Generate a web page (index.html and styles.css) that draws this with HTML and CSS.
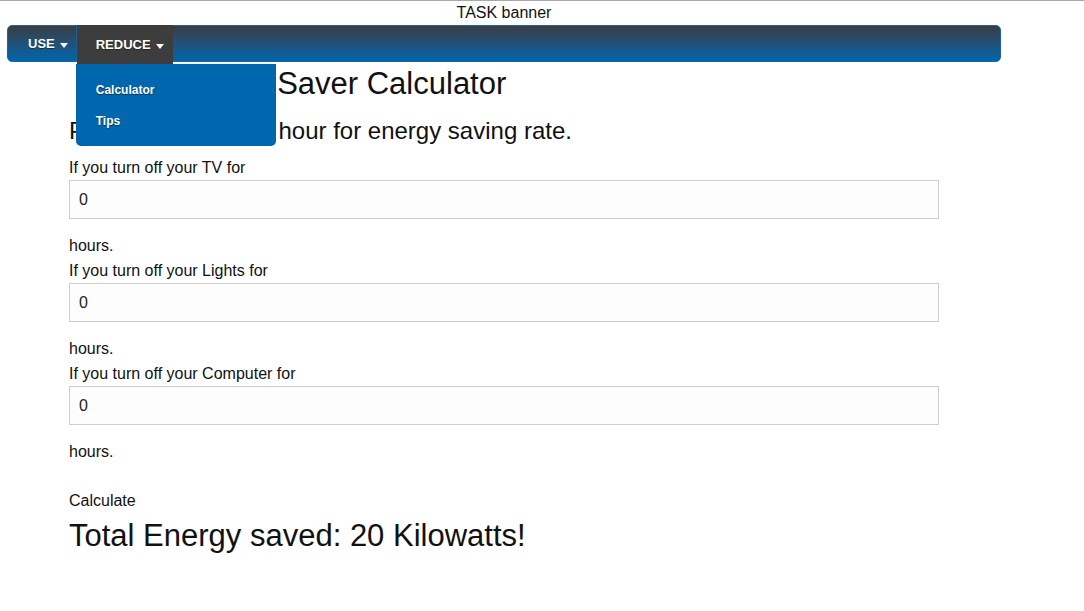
FILE: index.html
```html
<!DOCTYPE html>
<html lang="en">
<head>
<meta charset="utf-8">
<title>Energy Saver Calculator</title>
<link rel="stylesheet" href="styles.css">
</head>
<body>
<div class="page">
  <div class="banner">TASK banner</div>
  <nav class="nav">
    <ul class="menu">
      <li class="menu-item"><a href="#" class="menu-link">USE <span class="caret"></span></a></li>
      <li class="menu-item open"><a href="#" class="menu-link">REDUCE <span class="caret"></span></a>
        <ul class="dropdown">
          <li><a href="#" class="dropdown-link">Calculator</a></li>
          <li><a href="#" class="dropdown-link">Tips</a></li>
        </ul>
      </li>
    </ul>
  </nav>
  <main class="content">
    <h1 class="title">Home Energy Saver Calculator</h1>
    <h2 class="subtitle">Please type time in hour for energy saving rate.</h2>
    <form class="calc">
      <div class="field">
        <label class="label">If you turn off your TV for</label>
        <input class="input" type="text" value="0">
        <div class="unit">hours.</div>
      </div>
      <div class="field">
        <label class="label">If you turn off your Lights for</label>
        <input class="input" type="text" value="0">
        <div class="unit">hours.</div>
      </div>
      <div class="field">
        <label class="label">If you turn off your Computer for</label>
        <input class="input" type="text" value="0">
        <div class="unit">hours.</div>
      </div>
      <div class="calculate">Calculate</div>
      <div class="result">Total Energy saved: 20 Kilowatts!</div>
    </form>
  </main>
</div>
</body>
</html>
```
FILE: styles.css
```css
html, body {
  margin: 0;
  padding: 0;
  background: #fff;
}
body {
  font-family: "Liberation Sans", Arial, sans-serif;
  color: #111;
  border-top: 1px solid #a8a8a8;
}
.page {
  width: 994px;
  margin-left: 7px;
}
.banner {
  text-align: center;
  font-size: 16px;
  line-height: 18px;
  padding-top: 3px;
  height: 21px;
  color: #111;
}
.nav {
  height: 35px;
  border: 1px solid #1a64a0;
  border-radius: 5px;
  background: linear-gradient(to bottom, #3a3d41 0%, #244f74 45%, #0066ab 100%);
}
.menu {
  list-style: none;
  margin: 0;
  padding: 0;
  display: flex;
  height: 100%;
}
.menu-item {
  position: relative;
  display: flex;
}
.menu-item + .menu-item {
  border-left: 1px solid #1d5f96;
}
.menu-link {
  display: flex;
  align-items: center;
  gap: 5px;
  color: #fff;
  text-decoration: none;
  font-weight: bold;
  font-size: 13px;
  text-shadow: 0 1px 1px rgba(0, 0, 0, 0.45);
  padding: 0 8px 0 20px;
}
.open .menu-link {
  background: #3d3d3d;
  height: 39px;
  margin-top: -1px;
  padding: 0 8px 0 19px;
  width: 69px;
}
.caret {
  width: 0;
  height: 0;
  border-top: 5px solid #fff;
  border-left: 4px solid transparent;
  border-right: 4px solid transparent;
  margin-top: 3px;
}
.dropdown {
  position: absolute;
  top: 38px;
  left: -1px;
  width: 200px;
  margin: 0;
  padding: 11px 0 9px;
  list-style: none;
  background: #0067ae;
  border-radius: 0 0 5px 5px;
  z-index: 5;
}
.dropdown-link {
  display: block;
  line-height: 31px;
  padding-left: 20px;
  color: #fff;
  font-weight: bold;
  font-size: 12px;
  text-decoration: none;
  text-shadow: 0 1px 1px rgba(0, 0, 0, 0.5);
}
.content {
  margin-left: 62px;
  width: 870px;
}
.title {
  margin: 4px 0 0 10px;
  font-size: 31px;
  line-height: 36px;
  font-weight: normal;
}
.subtitle {
  margin: 15px 0 0;
  font-size: 24px;
  line-height: 28px;
  font-weight: normal;
}
.calc {
  margin-top: 14px;
}
.field {
  display: flex;
  flex-direction: column;
  align-items: flex-start;
  margin-bottom: 7px;
}
.label {
  font-size: 16px;
  line-height: 18px;
}
.input {
  box-sizing: border-box;
  width: 870px;
  height: 39px;
  margin-top: 3px;
  border: 1px solid #cfcfcf;
  background: #fdfdfd;
  padding: 0 9px;
  font-family: "Liberation Sans", Arial, sans-serif;
  font-size: 16px;
  color: #222;
  outline: none;
}
.unit {
  margin-top: 18px;
  font-size: 16px;
  line-height: 18px;
}
.calculate {
  margin-top: 31px;
  font-size: 16px;
  line-height: 18px;
}
.result {
  margin-top: 8px;
  font-size: 31px;
  line-height: 36px;
}
```
